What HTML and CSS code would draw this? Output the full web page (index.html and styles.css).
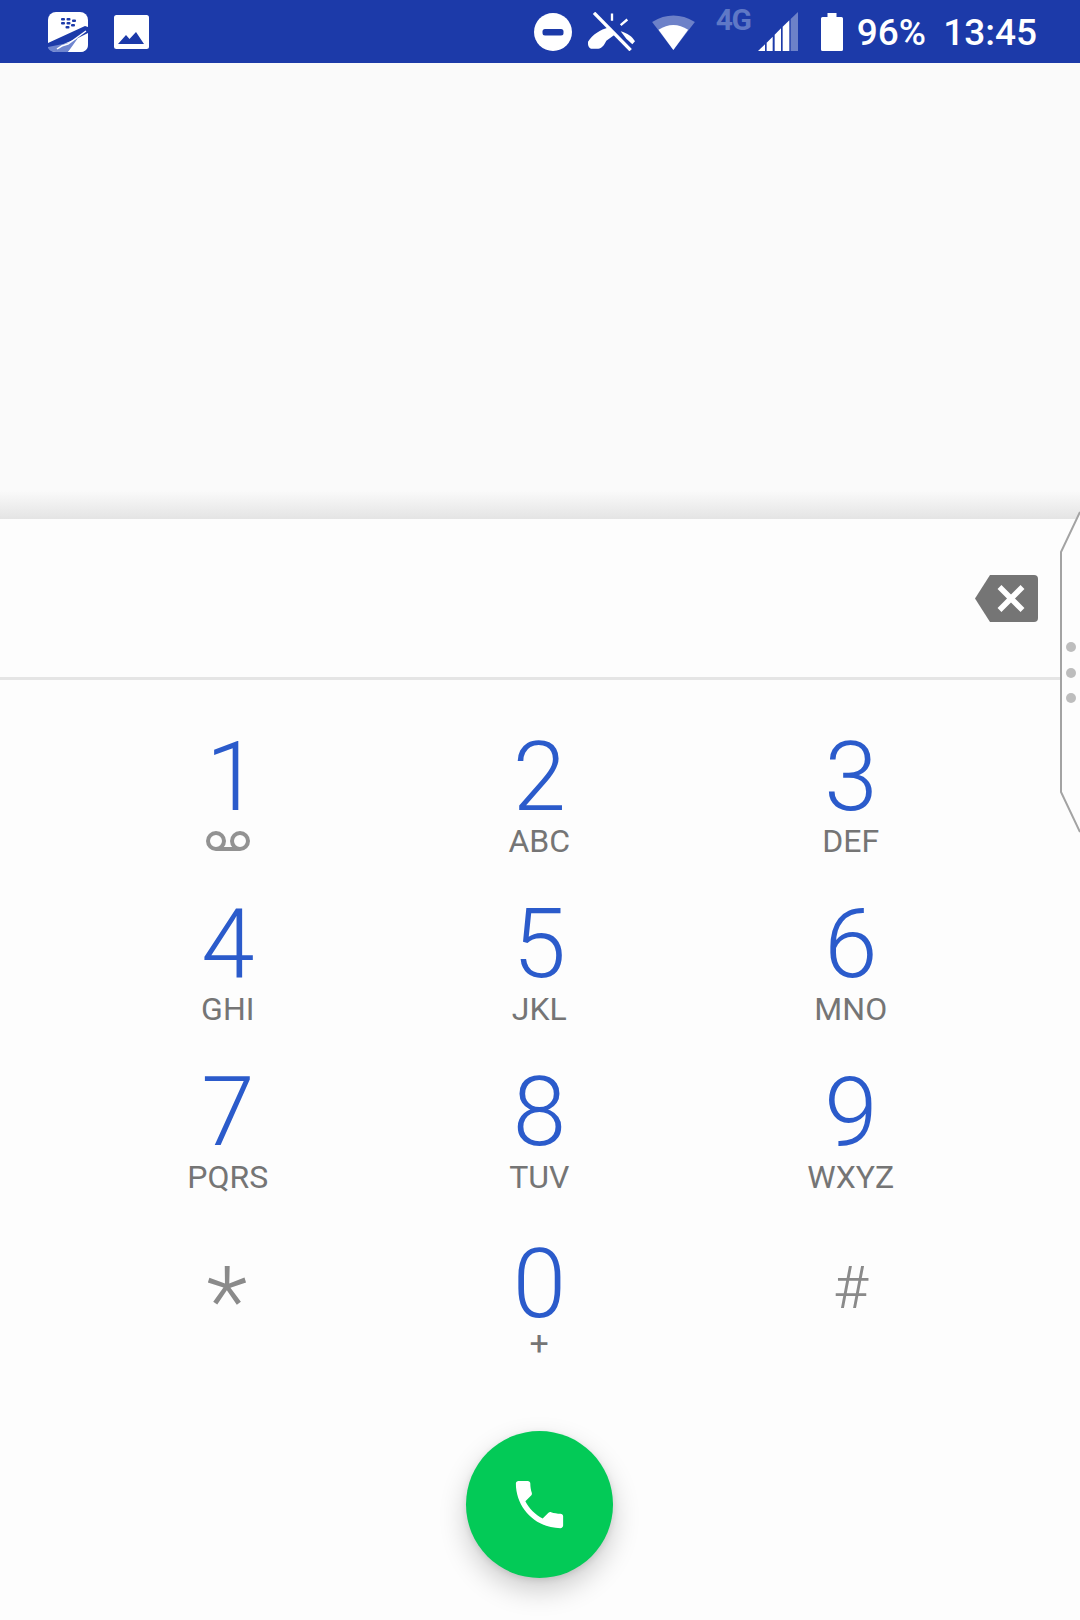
FILE: index.html
```html
<!DOCTYPE html>
<html lang="en"><head><meta charset="utf-8"><title>Dialer</title><link rel="stylesheet" href="styles.css"></head>
<body>
<div class="screen">
  <header class="status">
    <div class="notif">
      <svg class="i-bb" viewBox="0 0 40 40"><rect width="40" height="40" rx="8" fill="#fff"/>
        <g fill="#1c3aa9"><rect x="13" y="6" width="4" height="2.6" rx="1"/><rect x="18.5" y="6" width="4" height="2.6" rx="1"/><rect x="13" y="10" width="4" height="2.6" rx="1"/><rect x="18.5" y="10" width="4" height="2.6" rx="1"/><rect x="24" y="7.5" width="4" height="2.6" rx="1"/><rect x="23" y="12" width="4" height="2.6" rx="1"/><rect x="17.5" y="14" width="4" height="2.6" rx="1"/>
        <path d="M0 31 L37 14 L40 15 L40 21 L30 26 L18 31 L10 35 L0 35Z"/></g>
        <path d="M0 35 L10 33 L20 31 L30 26 L20 40 L8 40 Q2 40 0 36Z" fill="#6f85cf"/>
        <path d="M9 37 Q14 33 20 32 L38 19" fill="none" stroke="#fff" stroke-width="1.5"/>
        <path d="M20 40 L40 22 L40 32 Q40 40 32 40Z" fill="#fff"/></svg>
      <svg class="i-img" viewBox="0 0 35 34"><rect width="35" height="34" rx="2.5" fill="#fff"/><path d="M4 29 L12 20 L15.5 24 L22 17 L30 29Z" fill="#1c3aa9"/></svg>
    </div>
    <div class="sys">
      <svg class="i-dnd" viewBox="0 0 38 38"><circle cx="19" cy="19" r="19" fill="#fff"/><rect x="8.5" y="16" width="21" height="6.5" rx="2.5" fill="#1c3aa9"/></svg>
      <svg class="i-miss" viewBox="207 36 141 116"><path d="M207 125 C220 103 245 88 268 82 L292 100 L262 122 C256 135 248 146 238 146 L216 146 C208 143 206 133 207 125Z" fill="#fff"/><path d="M305 93 C325 98 340 110 348 123 L340 132 L322 116Z" fill="#fff"/><path d="M225 38 L335 150" stroke="#fff" stroke-width="10"/><path d="M279 40 V62 M325 58 L305 75" stroke="#fff" stroke-width="7"/></svg>
      <svg class="i-wifi" viewBox="395 35 133 112"><path d="M395 60 Q461 20 528 60 L461 147Z" fill="#fff" fill-opacity=".36"/><path d="M415 84 Q461 54 507 84 L461 147Z" fill="#fff"/></svg>
      <span class="net">4G</span>
      <svg class="i-sig" viewBox="716 33 120 117"><g fill="#fff"><path d="M716 150 L737 130 V150Z"/><path d="M742 125 L760 107 V150 H742Z"/><path d="M766 101 L785 82 V150 H766Z"/><path d="M790 77 L810 58 V150 H790Z"/></g><path d="M814 54 L836 33 V150 H814Z" fill="#fff" fill-opacity=".36"/></svg>
      <svg class="i-bat" viewBox="0 0 22 38"><path d="M6.5 0 H15.5 V4 H20.5 Q22 4 22 5.5 V36.5 Q22 38 20.5 38 H1.5 Q0 38 0 36.5 V5.5 Q0 4 1.5 4 H6.5Z" fill="#fff"/></svg>
      <span class="pct">96%</span>
      <span class="time">13:45</span>
    </div>
  </header>
  <div class="recents"></div>
  <main class="dialer">
    <div class="field">
      <svg class="i-back" viewBox="0 0 63 47"><path d="M15 0 H59 Q63 0 63 4 V43 Q63 47 59 47 H15 L0 23.5Z" fill="#757575"/><path d="M24.5 12 L47.5 35 M47.5 12 L24.5 35" stroke="#fff" stroke-width="5.5"/></svg>
    </div>
    <section class="keys">
      <div class="key"><span class="digit one">1</span><svg class="i-vm" viewBox="0 0 44 20"><circle cx="10" cy="10" r="8" fill="none" stroke="#929292" stroke-width="4"/><circle cx="34" cy="10" r="8" fill="none" stroke="#929292" stroke-width="4"/><path d="M10 18 H34" stroke="#929292" stroke-width="4"/></svg></div>
      <div class="key"><span class="digit">2</span><span class="sub">ABC</span></div>
      <div class="key"><span class="digit">3</span><span class="sub">DEF</span></div>
      <div class="key"><span class="digit">4</span><span class="sub">GHI</span></div>
      <div class="key"><span class="digit">5</span><span class="sub">JKL</span></div>
      <div class="key"><span class="digit">6</span><span class="sub">MNO</span></div>
      <div class="key"><span class="digit">7</span><span class="sub">PQRS</span></div>
      <div class="key"><span class="digit">8</span><span class="sub">TUV</span></div>
      <div class="key"><span class="digit">9</span><span class="sub">WXYZ</span></div>
      <div class="key"><span class="digit sym star">*</span></div>
      <div class="key"><span class="digit zero">0</span><span class="sub plus">+</span></div>
      <div class="key"><span class="digit sym hash">#</span></div>
    </section>
    <button class="fab" type="button"><svg class="i-call" viewBox="0 0 24 24"><path fill="#fff" d="M6.62 10.79c1.44 2.83 3.76 5.14 6.59 6.59l2.2-2.2c.27-.27.67-.36 1.02-.24 1.12.37 2.33.57 3.57.57.55 0 1 .45 1 1V20c0 .55-.45 1-1 1-9.39 0-17-7.61-17-17 0-.55.45-1 1-1h3.5c.55 0 1 .45 1 1 0 1.25.2 2.45.57 3.57.11.35.03.74-.25 1.02l-2.2 2.2z"/></svg></button>
    <div class="handle">
      <svg class="handle-edge" viewBox="0 0 20 320"><path d="M20 0 L1 40 V280 L20 320" fill="#fdfdfd" stroke="#a3a3a3" stroke-width="2"/></svg>
      <i class="dot"></i><i class="dot"></i><i class="dot"></i>
    </div>
  </main>
</div>
</body></html>
```
FILE: styles.css
```css
*{box-sizing:border-box}
html,body{margin:0;height:100%}
body{background:#fafafa;font-family:Roboto,"Liberation Sans",sans-serif}
.screen{width:1080px;height:1620px;display:flex;flex-direction:column;overflow:hidden}

.status{height:63px;flex:none;background:#1c3aa9;color:#fff;display:flex;justify-content:space-between;align-items:center}
.status svg{display:block;flex:none}
.notif{display:flex;align-items:center;padding-left:48px;gap:26px}
.sys{display:flex;align-items:center;padding-right:43px}
.i-bb{width:40px;height:40px}
.i-img{width:35px;height:34px}
.i-dnd{width:38px;height:38px;margin-right:16px}
.i-miss{width:47px;height:39px;margin-right:15px}
.i-wifi{width:47px;height:36px;margin-right:19px}
.net{width:33px;margin-right:9px;font-size:30px;line-height:30px;font-weight:700;letter-spacing:-1.5px;color:#5f78c6;align-self:flex-start;margin-top:-3px;white-space:nowrap}
.i-sig{width:40px;height:39px;margin-right:23px}
.i-bat{width:22px;height:38px;margin-right:14px}
.pct,.time{font-size:37px;line-height:44px;font-weight:500;white-space:nowrap;padding-top:3px}
.pct{margin-right:17px}

.recents{height:456px;flex:none;background:linear-gradient(to bottom,#fafafa 0,#e4e4e4 100%) bottom/100% 28px no-repeat}

.dialer{flex:1;position:relative;background:#fdfdfd}
.field{height:161px;border-bottom:3px solid #e5e5e5;display:flex;align-items:center;justify-content:flex-end;padding:0 42px 0 0}
.i-back{display:block;width:63px;height:47px}

.keys{display:grid;grid-template-columns:repeat(3,311.5px);grid-auto-rows:168px;padding:48px 0 0 72px}
.key{display:flex;flex-direction:column;align-items:center}
.digit{font-size:96px;line-height:96px;font-weight:300;color:#2b5bcb}
.key:nth-child(-n+3) .digit{margin-top:1px;margin-bottom:-1px}
.one{padding-left:9px}
.zero{margin-top:4px}
.sub{font-size:32px;line-height:36px;color:#757575;margin-top:-1px}
.plus{font-size:34px;margin-top:-7px}
.i-vm{display:block;width:44px;height:20px;margin-top:7px}
.sym{color:#8a8a8a}
.star{font-size:96px;line-height:100px;margin:20px 0 0 -2px}
.hash{font-size:60px;line-height:96px;margin-top:8px}

.fab{display:flex;align-items:center;justify-content:center;width:147px;height:147px;padding:0;margin:31px 0 0 466px;border:0;border-radius:50%;background:#03ca57;box-shadow:0 12px 28px rgba(0,0,0,.2),0 2px 6px rgba(0,0,0,.1)}
.i-call{display:block;width:63px;height:63px}

.handle{position:absolute;right:0;top:-7px;width:20px;height:320px}
.handle-edge{position:absolute;inset:0;width:20px;height:320px;overflow:visible}
.dot{position:absolute;left:6px;width:10px;height:10px;border-radius:50%;background:#bdbdbd}
.dot:nth-of-type(1){top:130px}
.dot:nth-of-type(2){top:156px}
.dot:nth-of-type(3){top:181px}
```
